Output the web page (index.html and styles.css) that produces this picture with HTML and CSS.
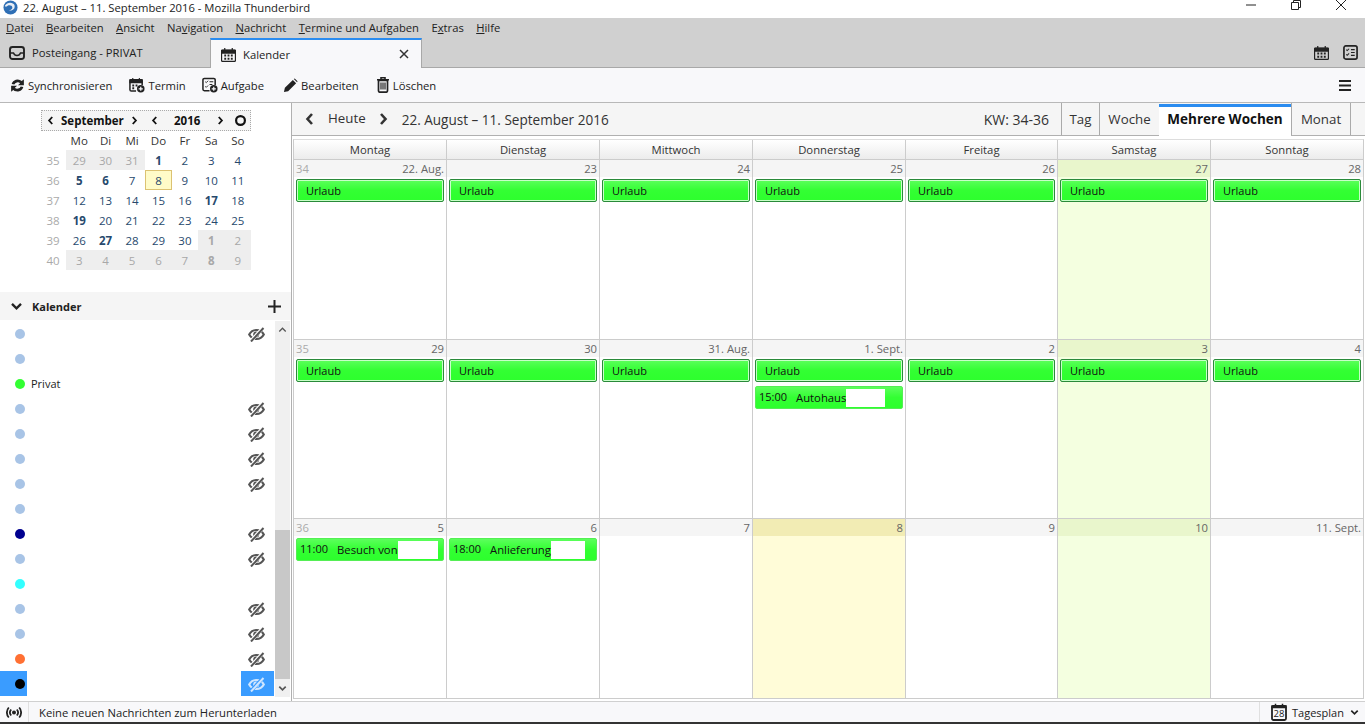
FILE: index.html
```html
<!DOCTYPE html>
<html lang="de">
<head>
<meta charset="utf-8">
<title>22. August – 11. September 2016 - Mozilla Thunderbird</title>
<link rel="stylesheet" href="styles.css">
</head>
<body>
<svg class="sprite" width="0" height="0" aria-hidden="true">
  <symbol id="i-cal" viewBox="0 0 16 16"><path d="M1.500 3.500h13a1 1 0 0 1 1 1v9.500a1.500 1.500 0 0 1-1.500 1.500H2a1.500 1.500 0 0 1-1.500-1.500V4.500a1 1 0 0 1 1-1z" fill="none" stroke="currentColor" stroke-width="1.500"/><path d="M1 3.500h14v3H1zM4 1v3M12 1v3" fill="currentColor" stroke="currentColor" stroke-width="1.300"/><path d="M3.500 8h2v2h-2zM7 8h2v2H7zM10.500 8h2v2h-2zM3.500 11.500h2v2h-2zM7 11.500h2v2H7zM10.500 11.500h2v2h-2z" fill="currentColor"/></symbol>
  <symbol id="i-tasks" viewBox="0 0 16 16"><rect x="1" y="1" width="14" height="14" rx="2" fill="none" stroke="currentColor" stroke-width="1.800"/><path d="M3.500 5l1 1 2-2M3.500 10l1 1 2-2" fill="none" stroke="currentColor" stroke-width="1.100"/><path d="M8.500 5h4M8.500 8h4M8.500 11h4" stroke="currentColor" stroke-width="1.300"/></symbol>
  <symbol id="i-inbox" viewBox="0 0 16 16"><rect x="1" y="2" width="14" height="12" rx="2.500" fill="none" stroke="currentColor" stroke-width="1.900"/><path d="M1 8h3.500c.7 2 2 2.500 3.500 2.500s2.800-.5 3.500-2.500H15" fill="none" stroke="currentColor" stroke-width="1.500"/></symbol>
  <symbol id="i-sync" viewBox="0 0 16 16"><path d="M1.800 6.500A6.500 6.500 0 0 1 12.500 3.300L14.800 1.300v6.500H8.500l2.300-2.300A4 4 0 0 0 4.600 7zM14.200 9.500A6.500 6.500 0 0 1 3.500 12.700L1.200 14.700V8.200h6.300l-2.300 2.300a4 4 0 0 0 6.200-1.500z" fill="currentColor"/></symbol>
  <symbol id="i-newevent" viewBox="0 0 17 17"><path d="M2 3h11a1 1 0 0 1 1 1v4.500M7.500 15H2.500A1.500 1.500 0 0 1 1 13.500V4a1 1 0 0 1 1-1" fill="none" stroke="currentColor" stroke-width="1.600"/><path d="M1 3h13v3H1zM4 1v2.500M11 1v2.500" fill="currentColor" stroke="currentColor" stroke-width="1.200"/><path d="M3.500 8h2v2h-2zM7 8h2v2H7zM3.500 11h2v2h-2z" fill="currentColor"/><circle cx="12.500" cy="12.500" r="4" fill="currentColor"/><path d="M12.500 10.300v4.400M10.300 12.500h4.400" stroke="#f8f8fa" stroke-width="1.300"/></symbol>
  <symbol id="i-newtask" viewBox="0 0 17 17"><path d="M8 14.500H2.500A1.500 1.500 0 0 1 1 13V3a1.500 1.500 0 0 1 1.500-1.500h10A1.500 1.500 0 0 1 14 3v5.500" fill="none" stroke="currentColor" stroke-width="1.600"/><path d="M3.500 5l1 1 2-2M3.500 10l1 1 2-2" fill="none" stroke="currentColor" stroke-width="1"/><path d="M8 5h4M8 8h3" stroke="currentColor" stroke-width="1.200"/><circle cx="12.500" cy="12.500" r="4" fill="currentColor"/><path d="M12.500 10.300v4.400M10.300 12.500h4.400" stroke="#f8f8fa" stroke-width="1.300"/></symbol>
  <symbol id="i-pencil" viewBox="0 0 16 16"><path d="M1 15l1-4.500L10.500 2l3.500 3.500L5.500 14zM11.500 1l1-.5 3 3-.5 1z" fill="currentColor"/></symbol>
  <symbol id="i-trash" viewBox="0 0 14 16"><path d="M5 2V.8h4V2M1 2.700h12" fill="none" stroke="currentColor" stroke-width="1.600"/><path d="M2.500 3.500h9v10.200a1.500 1.500 0 0 1-1.500 1.500H4a1.500 1.500 0 0 1-1.500-1.500z" fill="none" stroke="currentColor" stroke-width="1.700"/><path d="M5 5.500v7M7 5.500v7M9 5.500v7" stroke="currentColor" stroke-width="1.200"/></symbol>
  <symbol id="i-eye" viewBox="0 0 17 15"><path d="M1.200 7.500C3 4.300 5.500 3 8.500 3s5.500 1.300 7.300 4.500C14 10.700 11.500 12 8.500 12S3 10.700 1.200 7.500z" fill="none" stroke="currentColor" stroke-width="2.200"/><circle cx="8.200" cy="7.500" r="3" fill="currentColor"/><path d="M2.500 14.500L15 1" stroke="var(--eye-gap,#fff)" stroke-width="3.600"/><path d="M3 14.500L15.500 1" stroke="currentColor" stroke-width="2"/></symbol>
  <symbol id="i-left" viewBox="0 0 10 14"><path d="M7.500 2L3 7l4.500 5" fill="none" stroke="currentColor" stroke-width="2.600"/></symbol>
  <symbol id="i-right" viewBox="0 0 10 14"><path d="M2.500 2L7 7l-4.500 5" fill="none" stroke="currentColor" stroke-width="2.600"/></symbol>
  <symbol id="i-down" viewBox="0 0 14 10"><path d="M2 2l5 5 5-5" fill="none" stroke="currentColor" stroke-width="2.600"/></symbol>
  <symbol id="i-up" viewBox="0 0 14 10"><path d="M2 8l5-5 5 5" fill="none" stroke="currentColor" stroke-width="2"/></symbol>
  <symbol id="i-signal" viewBox="0 0 16 12"><circle cx="8" cy="6" r="2" fill="currentColor"/><path d="M5.200 3a4.500 4.500 0 0 0 0 6M10.800 3a4.500 4.500 0 0 1 0 6M2.800 1a7.500 7.500 0 0 0 0 10M13.200 1a7.500 7.500 0 0 1 0 10" fill="none" stroke="currentColor" stroke-width="1.800"/></symbol>
  <symbol id="i-today" viewBox="0 0 16 18"><path d="M2.500 3h11A1.500 1.500 0 0 1 15 4.500v11a1.500 1.500 0 0 1-1.500 1.500h-11A1.500 1.500 0 0 1 1 15.500v-11A1.500 1.500 0 0 1 2.500 3z" fill="none" stroke="currentColor" stroke-width="1.800"/><path d="M1 3h14v1.500H1zM4.500 .8v3M11.500 .8v3" stroke="currentColor" stroke-width="1.500"/></symbol>
</svg>

<header class="titlebar">
  <svg class="logo" viewBox="0 0 16 16" aria-hidden="true"><circle cx="8" cy="8" r="7.500" fill="#2f6fb5"/><path d="M2 6c2-3 6-4 9-2 1.500 1 2 3 1 5-1 1.500-4 3-6 2 2 0 4-1 4-3S7 5 5 6 3 8 2 6z" fill="#e9eef5"/></svg>
  <span class="title-text">22. August – 11. September 2016 - Mozilla Thunderbird</span>
  <div class="winctl">
    <svg viewBox="0 0 10 10" aria-hidden="true"><path d="M0 5h10" stroke="#222" stroke-width="1"/></svg>
    <svg viewBox="0 0 10 10" aria-hidden="true"><path d="M.5 2.500h7v7h-7zM2.500 2.500v-2h7v7h-2" fill="none" stroke="#222" stroke-width="1"/></svg>
    <svg viewBox="0 0 10 10" aria-hidden="true"><path d="M0 0l10 10M10 0L0 10" stroke="#222" stroke-width="1"/></svg>
  </div>
</header>

<div class="chrome">
  <nav class="menubar">
    <span><u>D</u>atei</span><span><u>B</u>earbeiten</span><span><u>A</u>nsicht</span><span>Na<u>v</u>igation</span><span><u>N</u>achricht</span><span><u>T</u>ermine und Aufgaben</span><span>E<u>x</u>tras</span><span><u>H</u>ilfe</span>
  </nav>
  <div class="tabbar">
    <div class="tab tab-inbox"><svg class="ic16"><use href="#i-inbox"/></svg><span>Posteingang - PRIVAT</span></div>
    <div class="tab tab-active"><svg class="ic15"><use href="#i-cal"/></svg><span class="tab-label">Kalender</span><svg class="tab-close" viewBox="0 0 10 10" aria-hidden="true"><path d="M1 1l8 8M9 1L1 9" stroke="#333" stroke-width="1.500"/></svg></div>
    <div class="tab-tools"><svg class="ic15"><use href="#i-cal"/></svg><svg class="ic15"><use href="#i-tasks"/></svg></div>
  </div>
</div>

<div class="toolbar">
  <button class="tbtn"><svg class="ic15"><use href="#i-sync"/></svg>Synchronisieren</button>
  <button class="tbtn b-event"><svg class="ic16"><use href="#i-newevent"/></svg>Termin</button>
  <button class="tbtn b-task"><svg class="ic16"><use href="#i-newtask"/></svg>Aufgabe</button>
  <button class="tbtn b-edit"><svg class="ic15"><use href="#i-pencil"/></svg>Bearbeiten</button>
  <button class="tbtn b-del"><svg class="ic-trash"><use href="#i-trash"/></svg>Löschen</button>
  <svg class="hamburger" viewBox="0 0 12 11" aria-hidden="true"><path d="M0 1h12M0 5.500h12M0 10h12" stroke="#222" stroke-width="2"/></svg>
</div>

<div class="workspace">
  <aside class="sidebar">
    <div class="minihead">
      <svg class="chev"><use href="#i-left"/></svg><b class="mh-month">September</b><svg class="chev"><use href="#i-right"/></svg>
      <svg class="chev mh-gap"><use href="#i-left"/></svg><b class="mh-year">2016</b><svg class="chev"><use href="#i-right"/></svg>
      <svg class="mh-today" viewBox="0 0 10 10" aria-hidden="true"><circle cx="5" cy="5" r="4" fill="none" stroke="#111" stroke-width="2"/></svg>
    </div>
    <div class="minimonth">
      <span></span><span class="dn">Mo</span><span class="dn">Di</span><span class="dn">Mi</span><span class="dn">Do</span><span class="dn">Fr</span><span class="dn">Sa</span><span class="dn">So</span>
      <span class="kw">35</span><span class="d out">29</span><span class="d out">30</span><span class="d out">31</span><span class="d bold">1</span><span class="d">2</span><span class="d">3</span><span class="d">4</span>
      <span class="kw">36</span><span class="d bold">5</span><span class="d bold">6</span><span class="d">7</span><span class="d today">8</span><span class="d">9</span><span class="d">10</span><span class="d">11</span>
      <span class="kw">37</span><span class="d">12</span><span class="d">13</span><span class="d">14</span><span class="d">15</span><span class="d">16</span><span class="d bold">17</span><span class="d">18</span>
      <span class="kw">38</span><span class="d bold">19</span><span class="d">20</span><span class="d">21</span><span class="d">22</span><span class="d">23</span><span class="d">24</span><span class="d">25</span>
      <span class="kw">39</span><span class="d">26</span><span class="d bold">27</span><span class="d">28</span><span class="d">29</span><span class="d">30</span><span class="d out bold">1</span><span class="d out">2</span>
      <span class="kw">40</span><span class="d out">3</span><span class="d out">4</span><span class="d out">5</span><span class="d out">6</span><span class="d out">7</span><span class="d out bold">8</span><span class="d out">9</span>
    </div>
    <div class="calhead">
      <svg class="calhead-chev"><use href="#i-down"/></svg><b>Kalender</b>
      <svg class="calhead-plus" viewBox="0 0 13 13" aria-hidden="true"><path d="M6.500 0v13M0 6.500h13" stroke="#222" stroke-width="2"/></svg>
    </div>
    <div class="callist">
      <ul class="rows">
        <li class="row"><span class="dotcell"><i class="dot c-blue"></i></span><span class="name"></span><span class="eyecell"><svg class="eye"><use href="#i-eye"/></svg></span></li>
        <li class="row"><span class="dotcell"><i class="dot c-blue"></i></span><span class="name"></span><span class="eyecell"></span></li>
        <li class="row"><span class="dotcell"><i class="dot c-green"></i></span><span class="name">Privat</span><span class="eyecell"></span></li>
        <li class="row"><span class="dotcell"><i class="dot c-blue"></i></span><span class="name"></span><span class="eyecell"><svg class="eye"><use href="#i-eye"/></svg></span></li>
        <li class="row"><span class="dotcell"><i class="dot c-blue"></i></span><span class="name"></span><span class="eyecell"><svg class="eye"><use href="#i-eye"/></svg></span></li>
        <li class="row"><span class="dotcell"><i class="dot c-blue"></i></span><span class="name"></span><span class="eyecell"><svg class="eye"><use href="#i-eye"/></svg></span></li>
        <li class="row"><span class="dotcell"><i class="dot c-blue"></i></span><span class="name"></span><span class="eyecell"><svg class="eye"><use href="#i-eye"/></svg></span></li>
        <li class="row"><span class="dotcell"><i class="dot c-blue"></i></span><span class="name"></span><span class="eyecell"></span></li>
        <li class="row"><span class="dotcell"><i class="dot c-navy"></i></span><span class="name"></span><span class="eyecell"><svg class="eye"><use href="#i-eye"/></svg></span></li>
        <li class="row"><span class="dotcell"><i class="dot c-blue"></i></span><span class="name"></span><span class="eyecell"><svg class="eye"><use href="#i-eye"/></svg></span></li>
        <li class="row"><span class="dotcell"><i class="dot c-cyan"></i></span><span class="name"></span><span class="eyecell"></span></li>
        <li class="row"><span class="dotcell"><i class="dot c-blue"></i></span><span class="name"></span><span class="eyecell"><svg class="eye"><use href="#i-eye"/></svg></span></li>
        <li class="row"><span class="dotcell"><i class="dot c-blue"></i></span><span class="name"></span><span class="eyecell"><svg class="eye"><use href="#i-eye"/></svg></span></li>
        <li class="row"><span class="dotcell"><i class="dot c-orange"></i></span><span class="name"></span><span class="eyecell"><svg class="eye"><use href="#i-eye"/></svg></span></li>
        <li class="row selected"><span class="dotcell"><i class="dot c-black"></i></span><span class="name"></span><span class="eyecell"><svg class="eye"><use href="#i-eye"/></svg></span></li>
      </ul>
      <div class="scrollbar">
        <svg class="sb-arrow"><use href="#i-up"/></svg>
        <div class="sb-track"><div class="sb-thumb"></div></div>
        <svg class="sb-arrow"><use href="#i-down"/></svg>
      </div>
    </div>
  </aside>

  <main class="calendar">
    <div class="calnav">
      <svg class="nav-arrow na-prev"><use href="#i-left"/></svg>
      <span class="nav-today">Heute</span>
      <svg class="nav-arrow na-next"><use href="#i-right"/></svg>
      <span class="nav-range">22. August – 11. September 2016</span>
      <span class="nav-kw">KW: 34-36</span>
      <div class="viewtabs">
        <span class="vt vt-day">Tag</span><span class="vt vt-week">Woche</span><span class="vt vt-multi">Mehrere Wochen</span><span class="vt vt-month">Monat</span>
      </div>
    </div>
    <div class="multiweek">
      <div class="dayheads">
        <span>Montag</span><span>Dienstag</span><span>Mittwoch</span><span>Donnerstag</span><span>Freitag</span><span>Samstag</span><span>Sonntag</span>
      </div>
      <div class="weeks">
        <div class="cell"><div class="chead"><span class="wk">34</span><span>22. Aug.</span></div><div class="ev allday">Urlaub</div></div>
        <div class="cell"><div class="chead"><span></span><span>23</span></div><div class="ev allday">Urlaub</div></div>
        <div class="cell"><div class="chead"><span></span><span>24</span></div><div class="ev allday">Urlaub</div></div>
        <div class="cell"><div class="chead"><span></span><span>25</span></div><div class="ev allday">Urlaub</div></div>
        <div class="cell"><div class="chead"><span></span><span>26</span></div><div class="ev allday">Urlaub</div></div>
        <div class="cell weekend"><div class="chead"><span></span><span>27</span></div><div class="ev allday">Urlaub</div></div>
        <div class="cell"><div class="chead"><span></span><span>28</span></div><div class="ev allday">Urlaub</div></div>

        <div class="cell"><div class="chead"><span class="wk">35</span><span>29</span></div><div class="ev allday">Urlaub</div></div>
        <div class="cell"><div class="chead"><span></span><span>30</span></div><div class="ev allday">Urlaub</div></div>
        <div class="cell"><div class="chead"><span></span><span>31. Aug.</span></div><div class="ev allday">Urlaub</div></div>
        <div class="cell"><div class="chead"><span></span><span>1. Sept.</span></div><div class="ev allday">Urlaub</div>
          <div class="ev timed"><span class="time">15:00</span><span class="evname">Autohaus</span><span class="redact r-auto"></span></div></div>
        <div class="cell"><div class="chead"><span></span><span>2</span></div><div class="ev allday">Urlaub</div></div>
        <div class="cell weekend"><div class="chead"><span></span><span>3</span></div><div class="ev allday">Urlaub</div></div>
        <div class="cell"><div class="chead"><span></span><span>4</span></div><div class="ev allday">Urlaub</div></div>

        <div class="cell"><div class="chead"><span class="wk">36</span><span>5</span></div>
          <div class="ev timed"><span class="time">11:00</span><span class="evname">Besuch von</span><span class="redact r-besuch"></span></div></div>
        <div class="cell"><div class="chead"><span></span><span>6</span></div>
          <div class="ev timed"><span class="time">18:00</span><span class="evname">Anlieferung</span><span class="redact r-anl"></span></div></div>
        <div class="cell"><div class="chead"><span></span><span>7</span></div></div>
        <div class="cell today-col"><div class="chead"><span></span><span>8</span></div></div>
        <div class="cell"><div class="chead"><span></span><span>9</span></div></div>
        <div class="cell weekend"><div class="chead"><span></span><span>10</span></div></div>
        <div class="cell"><div class="chead"><span></span><span>11. Sept.</span></div></div>
      </div>
    </div>
  </main>
</div>

<footer class="statusbar">
  <span class="st-signal"><svg class="ic-signal"><use href="#i-signal"/></svg></span>
  <span class="st-msg">Keine neuen Nachrichten zum Herunterladen</span>
  <span class="st-plan"><span class="today-ic"><svg class="ic-today"><use href="#i-today"/></svg><em>28</em></span>Tagesplan<svg class="st-chev"><use href="#i-down"/></svg></span>
</footer>
</body>
</html>
```
FILE: styles.css
```css
* { box-sizing: border-box; }
html, body { margin: 0; padding: 0; height: 100%; }
body {
  width: 1365px; height: 724px; overflow: hidden;
  display: flex; flex-direction: column;
  font-family: "Open Sans", "Noto Sans", "Liberation Sans", sans-serif;
  font-size: 11.250px; color: #222; background: #fff;
}
.sprite { position: absolute; }
svg { display: block; flex: none; }
.ic15 { width: 15px; height: 15px; }
.ic16 { width: 16px; height: 16px; }

/* title bar */
.titlebar { height: 18px; flex: none; display: flex; align-items: center; padding-left: 3px; background: #fff; overflow: hidden; }
.logo { width: 15px; height: 15px; margin-top: -4px; }
.title-text { margin-left: 5px; margin-top: -3px; color: #222; }
.winctl { margin-left: auto; display: flex; gap: 35px; padding-right: 19px; }
.winctl svg { width: 10px; height: 10px; margin-top: -8px; }

/* menu + tabs */
.chrome { flex: none; height: 50px; background: #d0d0d0; border-bottom: 1px solid #a8a8a8; }
.menubar { height: 20px; display: flex; align-items: center; padding: 0 0 1px 6px; gap: 12.400px; color: #222; }
.tabbar { height: 29px; display: flex; align-items: stretch; }
.tab { display: flex; align-items: center; }
.tab-inbox { width: 210px; padding-left: 9px; gap: 7px; }
.tab-active { width: 212px; background: #f8f8fa; border-top: 2px solid #2a8cf0; border-left: 1px solid #a8a8a8; border-right: 1px solid #a8a8a8; padding-left: 10px; margin-bottom: -1px; }
.tab-label { margin-left: 7px; }
.tab-close { width: 10px; height: 10px; margin-left: auto; margin-right: 12px; }
.tab-tools { margin-left: auto; display: flex; align-items: center; gap: 14px; padding-right: 7px; color: #222; }

/* toolbar */
.toolbar { flex: none; height: 35px; display: flex; align-items: center; padding-left: 10px; background: #f8f8fa; border-bottom: 1px solid #b8b8b8; }
.tbtn { display: flex; align-items: center; gap: 3px; padding: 0; border: 0; background: none; font: inherit; color: #222; }
.b-event { margin-left: 17px; }
.b-task { margin-left: 16px; }
.b-edit { margin-left: 19px; }
.b-del { margin-left: 17px; }
.ic-trash { width: 14px; height: 16px; }
.hamburger { width: 12px; height: 11px; margin-left: auto; margin-right: 14px; }

/* workspace */
.workspace { flex: 1; min-height: 0; display: flex; }
.sidebar { width: 291px; flex: none; display: flex; flex-direction: column; }
.minihead { margin: 7px 0 0 41px; width: 210px; height: 21px; display: flex; align-items: center; padding-left: 5px; background: #f5f5f5; border: 1px dotted #aaa; color: #111; }
.chev { width: 7px; height: 11px; }
.mh-month { margin: 0 7px; width: 63px; font-size: 11.500px; white-space: nowrap; }
.mh-gap { margin-left: 13px; }
.mh-year { width: 27px; margin: 0 16px; font-size: 11.500px; }
.mh-today { width: 11px; height: 11px; margin-left: 11px; }
.minimonth { margin-left: 40px; display: grid; grid-template-columns: 26px repeat(7, 26.430px); grid-auto-rows: 20px; grid-template-rows: 19px; font-size: 11.500px; width: 211px; }
.minimonth span { display: flex; align-items: center; justify-content: center; }
.dn { color: #333; }
.kw { color: #aaa; }
.d { color: #27496d; }
.d.bold { font-weight: 700; }
.d.out { background: #eeeeee; color: #a8a8a8; }
.d.today { background: #fffbc8; border: 1px solid #dcc272; }

.calhead { margin-top: 22px; height: 28px; flex: none; display: flex; align-items: center; padding-left: 10px; background: #f5f5f5; font-size: 11px; color: #222; }
.calhead b { margin-left: 9px; }
.calhead-chev { width: 13px; height: 9px; }
.calhead-plus { width: 13px; height: 13px; margin-left: auto; margin-right: 10px; }
.callist { flex: none; height: 376px; margin-top: 1px; display: flex; padding-right: 1px; }
.rows { flex: 1; margin: 0; padding: 0; list-style: none; }
.row { height: 25px; display: flex; align-items: center; font-size: 11px; }
.dotcell { width: 27px; height: 100%; display: flex; align-items: center; padding-left: 15px; flex: none; }
.dot { width: 10px; height: 10px; border-radius: 50%; display: block; }
.c-blue { background: #a8c4e6; }
.c-green { background: #33ff33; }
.c-navy { background: #00008f; }
.c-cyan { background: #33ffff; }
.c-orange { background: #ff7033; }
.c-black { background: #000; }
.name { flex: 1; height: 100%; display: flex; align-items: center; padding-left: 4px; background: #fff; }
.eyecell { width: 33px; height: 100%; flex: none; display: flex; align-items: center; padding: 1px 0 0 7px; color: #555; }
.eye { width: 17px; height: 15px; }
.row.selected .dotcell, .row.selected .eyecell { background: #3a9cff; }
.row.selected .eyecell { color: #cfe6ff; --eye-gap: #3a9cff; }
.scrollbar { width: 15px; flex: none; margin-left: 1px; display: flex; flex-direction: column; background: #f0f0f0; color: #555; }
.sb-arrow { width: 9px; height: 7px; margin: 5px 3px; }
.sb-track { flex: 1; padding-top: 192px; }
.sb-thumb { height: 149px; background: #c8c8c8; }

/* main calendar */
.calendar { flex: 1; min-width: 0; border-left: 1px solid #b0b0b0; display: flex; flex-direction: column; }
.calnav { flex: none; height: 33px; display: flex; align-items: center; background: #f5f5f5; border-bottom: 1px solid #b0b0b0; font-size: 13.300px; color: #333; }
.nav-arrow { width: 11px; height: 14px; }
.na-prev { margin-left: 12px; }
.nav-today { margin-left: 13px; margin-top: -3px; }
.na-next { margin-left: 12px; }
.nav-range { margin-left: 13px; margin-top: 1px; font-size: 13.550px; white-space: nowrap; }
.nav-kw { margin-left: auto; margin-right: 12px; font-size: 14px; }
.viewtabs { display: flex; align-self: stretch; margin-right: 14px; }
.vt { display: flex; align-items: center; justify-content: center; border-left: 1px solid #aaa; }
.vt-day { width: 38px; }
.vt-week { width: 60px; }
.vt-multi { width: 132px; margin: 1px 0 -1px; padding-bottom: 5px; background: #fff; border-top: 3px solid #2a8cf0; border-left: 0; font-size: 13.500px; font-weight: 700; color: #111; }
.vt-month { width: 60px; border-right: 1px solid #aaa; border-left: 1px solid #aaa; }

.multiweek { flex: none; margin: 3px 1px 0 1px; border-left: 1px solid #ccc; border-right: 1px solid #ccc; border-top: 1px solid #ddd; border-bottom: 1px solid #ccc; }
.dayheads { height: 20px; display: grid; grid-template-columns: 152px 153px 153px 153px 152px 153px 153px; background: linear-gradient(#fff, #ececec); border-bottom: 1px solid #ccc; font-size: 11.300px; color: #333; }
.dayheads span { display: flex; align-items: center; justify-content: center; border-left: 1px solid #ccc; }
.dayheads span:first-child { border-left: 0; }
.weeks { display: grid; grid-template-columns: 152px 153px 153px 153px 152px 153px 153px; grid-template-rows: 179px 179px 180px; }
.cell { border-left: 1px solid #ccc; border-top: 1px solid #ccc; min-width: 0; background: #fff; }
.cell:nth-child(7n+1) { border-left: 0; }
.cell:nth-child(-n+7) { border-top: 0; }
.cell.weekend { background: #f4ffe0; }
.cell.today-col { background: #fffcd8; }
.chead { height: 17px; display: flex; justify-content: space-between; align-items: center; padding: 0 2px; background: #f5f5f5; color: #666; white-space: nowrap; }
.weekend .chead { background: #e9f6cc; }
.today-col .chead { background: #f2ecb4; }
.wk { color: #aaa; }
.ev { margin: 2px 2px 0 2px; color: #111; font-size: 11px; }
.allday { height: 23px; display: flex; align-items: center; padding-left: 9px; border: 1px solid #2a8a3a; border-radius: 2px; box-shadow: inset 0 0 0 1px #c8ffc8; background: linear-gradient(#5cff5c, #33ff33 50%, #2dff2d); }
.timed { height: 23px; display: flex; align-items: center; padding-left: 3px; border-radius: 2px; border: 1px solid #55ee55; background: linear-gradient(#5cff5c, #33ff33 50%, #2dff2d); }
.allday + .timed { margin-top: 4px; }
.time { width: 37px; margin-top: -2px; flex: none; font-size: 11px; }
.evname { white-space: nowrap; font-size: 11.300px; }
.redact { height: 18px; background: #fff; display: block; flex: none; }
.r-auto { width: 39px; }
.r-besuch { width: 40px; }
.r-anl { width: 34px; }

/* status bar */
.statusbar { flex: none; height: 23px; display: flex; align-items: center; background: #f8f8fa; border-top: 1px solid #d0d0d0; border-bottom: 2px solid #333; color: #222; }
.st-signal { width: 29px; height: 100%; display: flex; align-items: center; padding-left: 6px; border-right: 1px solid #e0e0e0; flex: none; }
.ic-signal { width: 16px; height: 13px; }
.st-msg { margin-left: 10px; }
.st-plan { margin-left: auto; width: 106px; height: 100%; display: flex; align-items: center; padding-left: 11px; border-left: 1px solid #e0e0e0; font-size: 11px; }
.today-ic { width: 16px; height: 18px; position: relative; margin-right: 5px; display: block; }
.ic-today { width: 16px; height: 18px; }
.today-ic em { position: absolute; left: 0; right: 0; top: 5px; text-align: center; font-style: normal; font-size: 9.500px; line-height: 11px; }
.st-chev { width: 9px; height: 7px; margin-left: 6px; }
```
